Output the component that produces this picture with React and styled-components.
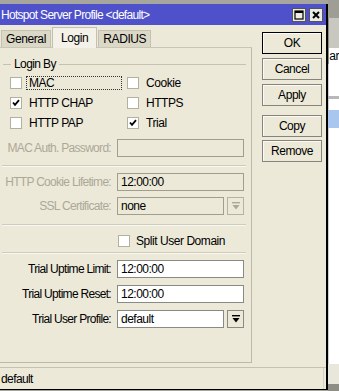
import React from 'react';
import styled, { createGlobalStyle } from 'styled-components';

const GlobalStyle = createGlobalStyle`
  body {
    margin: 0;
    background: #a7a69e;
    font-family: "Liberation Sans", Arial, sans-serif;
    font-size: 11px;
    letter-spacing: -0.45px;
  }
`;

const Page = styled.div`
  width: 339px;
  height: 391px;
  display: flex;
  overflow: hidden;
  background: #a7a69e;
`;

const MainColumn = styled.div`
  width: 329px;
  display: flex;
  flex-direction: column;
  padding-top: 4px;
`;

const Window = styled.div`
  height: 385px;
  display: flex;
  flex-direction: column;
  border-right: 2px solid #000;
  border-bottom: 1px solid #000;
  background: #ece9d8;
`;

const TitleBar = styled.div`
  height: 21px;
  flex: none;
  display: flex;
  align-items: center;
  justify-content: space-between;
  background: #4e51c9;
  color: #fff;
  font-size: 12px;
  letter-spacing: -0.7px;
  padding: 0 3px 0 1px;
`;

const TitleButtons = styled.div`
  display: flex;
  gap: 3px;
`;

const TitleButton = styled.div`
  width: 14px;
  height: 14px;
  box-sizing: border-box;
  background: #ecebe4;
  border: 1px solid #555;
  display: flex;
  align-items: center;
  justify-content: center;
`;

const Body = styled.div`
  flex: 1;
  display: flex;
`;

const LeftColumn = styled.div`
  width: 252px;
  display: flex;
  flex-direction: column;
`;

const TabsRow = styled.div`
  height: 22px;
  display: flex;
  align-items: flex-end;
  padding-left: 1px;
`;

const Tab = styled.div`
  height: ${(p) => (p.active ? '21px' : '17px')};
  box-sizing: border-box;
  padding: 0 ${(p) => (p.active ? '8px' : '4px')};
  display: flex;
  align-items: center;
  background: ${(p) => (p.active ? '#f4f2e8' : '#dcd8c7')};
  border: 1px solid #c4c1b0;
  border-bottom: none;
  margin-right: 1px;
  font-size: 12px;
  letter-spacing: -0.4px;
  position: relative;
  top: ${(p) => (p.active ? '1px' : '0')};
`;

const Panel = styled.div`
  height: 316px;
  box-sizing: border-box;
  border-top: 1px solid #c9c6b6;
  border-right: 1px solid #bcb9a8;
  border-bottom: 1px solid #bcb9a8;
  display: flex;
  flex-direction: column;
  padding: 9px 5px 0 0;
`;

const GroupTitle = styled.div`
  height: 14px;
  display: flex;
  align-items: center;
  padding-left: 3px;
  font-size: 12px;
  letter-spacing: -0.6px;
  &::before {
    content: '';
    width: 8px;
    border-top: 1px solid #c5c2b2;
    margin-right: 3px;
  }
  &::after {
    content: '';
    flex: 1;
    border-top: 1px solid #c5c2b2;
    margin-left: 3px;
  }
`;

const CheckGrid = styled.div`
  display: grid;
  grid-template-columns: 117px 1fr;
  grid-auto-rows: 20px;
  padding-left: 10px;
  margin-top: 2px;
`;

const CheckItem = styled.div`
  display: flex;
  align-items: center;
  gap: 5px;
`;

const Box = styled.div`
  width: 12px;
  height: 12px;
  box-sizing: border-box;
  background: #fff;
  border: 1px solid #b3b0a2;
  display: flex;
  align-items: center;
  justify-content: center;
`;

const CheckLabel = styled.span`
  font-size: 12px;
  padding: 0 2px;
  outline: ${(p) => (p.focused ? '1px dotted #333' : 'none')};
  width: ${(p) => (p.focused ? '90px' : 'auto')};
  line-height: 12px;
`;

const FieldRow = styled.div`
  height: 18px;
  display: flex;
  align-items: center;
  margin-top: ${(p) => p.gap}px;
`;

const FieldLabel = styled.div`
  width: 111px;
  text-align: right;
  padding-right: 6px;
  font-size: 12px;
  letter-spacing: -0.7px;
  white-space: nowrap;
  color: ${(p) => (p.disabled ? '#aca899' : '#000')};
  flex: none;
`;

const Input = styled.div`
  width: ${(p) => (p.short ? '107px' : '127px')};
  height: 18px;
  box-sizing: border-box;
  border: 1px solid ${(p) => (p.disabled ? '#a19e90' : '#8a8a84')};
  background: ${(p) => (p.disabled ? '#ece9d8' : '#fff')};
  padding-left: 3px;
  display: flex;
  align-items: center;
  font-size: 12px;
  letter-spacing: -0.5px;
`;

const DropButton = styled.div`
  width: 17px;
  height: 18px;
  box-sizing: border-box;
  margin-left: 3px;
  border: 1px solid ${(p) => (p.disabled ? '#b5b2a4' : '#8a8a84')};
  background: #ece9d8;
  display: flex;
  align-items: center;
  justify-content: center;
`;

const Separator = styled.div`
  margin: ${(p) => p.top}px 0 0 2px;
  height: 0;
  border-top: 1px solid #cfccbd;
  border-bottom: 1px solid #f8f7f1;
`;

const SplitRow = styled.div`
  height: 20px;
  margin-top: 5px;
  padding-left: 118px;
  display: flex;
  align-items: center;
  gap: 6px;
  font-size: 12px;
`;

const RightColumn = styled.div`
  flex: 1;
  display: flex;
  flex-direction: column;
  padding: 7px 0 0 10px;
`;

const Button = styled.div`
  width: 60px;
  height: 22px;
  box-sizing: border-box;
  border: 1px solid ${(p) => (p.primary ? '#000' : '#85837a')};
  box-shadow: inset 1px 1px 0 #fbfaf6;
  display: flex;
  align-items: center;
  justify-content: center;
  font-size: 12px;
  margin-top: ${(p) => p.gap}px;
`;

const StatusBar = styled.div`
  height: 22px;
  flex: none;
  display: flex;
  border-top: 1px solid #c5c2b2;
  box-sizing: border-box;
`;

const StatusText = styled.div`
  width: 322px;
  display: flex;
  align-items: center;
  padding-left: 1px;
  font-size: 12px;
  letter-spacing: -0.6px;
  border-right: 1px solid #d6d3c4;
`;

const Sliver = styled.div`
  flex: 1;
  display: flex;
  flex-direction: column;
  background: #fff;
`;

const Stripe = styled.div`
  height: ${(p) => p.h}px;
  flex: none;
  background: ${(p) => p.bg};
  border-left: 1px solid ${(p) => p.edge || 'transparent'};
  font-size: 12px;
  overflow: hidden;
  white-space: nowrap;
  display: flex;
  align-items: center;
`;

const Check = () => (
  <svg width="8" height="8" viewBox="0 0 8 8">
    <path d="M1 3.5 L3 5.8 L7 1.2" fill="none" stroke="#000" strokeWidth="1.8" />
  </svg>
);

const DropIcon = ({ disabled }) => (
  <svg width="8" height="8" viewBox="0 0 8 8">
    <rect x="0" y="0" width="8" height="1.4" fill={disabled ? '#aca899' : '#000'} />
    <path d="M0.5 3 H7.5 L4 7.5 Z" fill={disabled ? '#aca899' : '#000'} />
  </svg>
);

const CheckBox = ({ checked }) => <Box>{checked && <Check />}</Box>;

const App = () => (
  <Page>
    <GlobalStyle />
    <MainColumn>
      <Window>
        <TitleBar>
          <span>Hotspot Server Profile &lt;default&gt;</span>
          <TitleButtons>
            <TitleButton>
              <svg width="10" height="10" viewBox="0 0 10 10">
                <rect x="1" y="1" width="8" height="8" fill="none" stroke="#000" strokeWidth="1.2" />
                <rect x="1" y="1" width="8" height="2" fill="#000" />
              </svg>
            </TitleButton>
            <TitleButton>
              <svg width="10" height="10" viewBox="0 0 10 10">
                <path d="M2 2 L8 8 M8 2 L2 8" stroke="#000" strokeWidth="2" />
              </svg>
            </TitleButton>
          </TitleButtons>
        </TitleBar>
        <Body>
          <LeftColumn>
            <TabsRow>
              <Tab>General</Tab>
              <Tab active>Login</Tab>
              <Tab>RADIUS</Tab>
            </TabsRow>
            <Panel>
              <GroupTitle>Login By</GroupTitle>
              <CheckGrid>
                <CheckItem>
                  <CheckBox />
                  <CheckLabel focused>MAC</CheckLabel>
                </CheckItem>
                <CheckItem>
                  <CheckBox />
                  <CheckLabel>Cookie</CheckLabel>
                </CheckItem>
                <CheckItem>
                  <CheckBox checked />
                  <CheckLabel>HTTP CHAP</CheckLabel>
                </CheckItem>
                <CheckItem>
                  <CheckBox />
                  <CheckLabel>HTTPS</CheckLabel>
                </CheckItem>
                <CheckItem>
                  <CheckBox />
                  <CheckLabel>HTTP PAP</CheckLabel>
                </CheckItem>
                <CheckItem>
                  <CheckBox checked />
                  <CheckLabel>Trial</CheckLabel>
                </CheckItem>
              </CheckGrid>
              <FieldRow gap={6}>
                <FieldLabel disabled>MAC Auth. Password:</FieldLabel>
                <Input disabled />
              </FieldRow>
              <Separator top={8} />
              <FieldRow gap={6}>
                <FieldLabel disabled>HTTP Cookie Lifetime:</FieldLabel>
                <Input disabled>12:00:00</Input>
              </FieldRow>
              <FieldRow gap={6}>
                <FieldLabel disabled>SSL Certificate:</FieldLabel>
                <Input disabled short>none</Input>
                <DropButton disabled>
                  <DropIcon disabled />
                </DropButton>
              </FieldRow>
              <Separator top={9} />
              <SplitRow>
                <Box />
                <span>Split User Domain</span>
              </SplitRow>
              <Separator top={1} />
              <FieldRow gap={6}>
                <FieldLabel>Trial Uptime Limit:</FieldLabel>
                <Input>12:00:00</Input>
              </FieldRow>
              <FieldRow gap={7}>
                <FieldLabel>Trial Uptime Reset:</FieldLabel>
                <Input>12:00:00</Input>
              </FieldRow>
              <FieldRow gap={7}>
                <FieldLabel>Trial User Profile:</FieldLabel>
                <Input short>default</Input>
                <DropButton>
                  <DropIcon />
                </DropButton>
              </FieldRow>
            </Panel>
          </LeftColumn>
          <RightColumn>
            <Button primary gap={0}>OK</Button>
            <Button gap={4}>Cancel</Button>
            <Button gap={4}>Apply</Button>
            <Button gap={9}>Copy</Button>
            <Button gap={3}>Remove</Button>
          </RightColumn>
        </Body>
        <StatusBar>
          <StatusText>default</StatusText>
        </StatusBar>
      </Window>
    </MainColumn>
    <Sliver>
      <Stripe h={18} bg="#9f9e95" />
      <Stripe h={30} bg="#c9c8c0" edge="#8d8c84" />
      <Stripe h={16} bg="#fff" edge="#8d8c84">ar</Stripe>
      <Stripe h={32} bg="#fff" edge="#d0d0d0" />
      <Stripe h={3} bg="#b8b8b8" />
      <Stripe h={11} bg="#fff" edge="#d0d0d0" />
      <Stripe h={18} bg="#a9c6ef" />
      <Stripe h={236} bg="#fff" edge="#d0d0d0" />
      <Stripe h={20} bg="#e9e7dc" />
      <Stripe h={7} bg="#8f8e86" />
    </Sliver>
  </Page>
);

export default App;
